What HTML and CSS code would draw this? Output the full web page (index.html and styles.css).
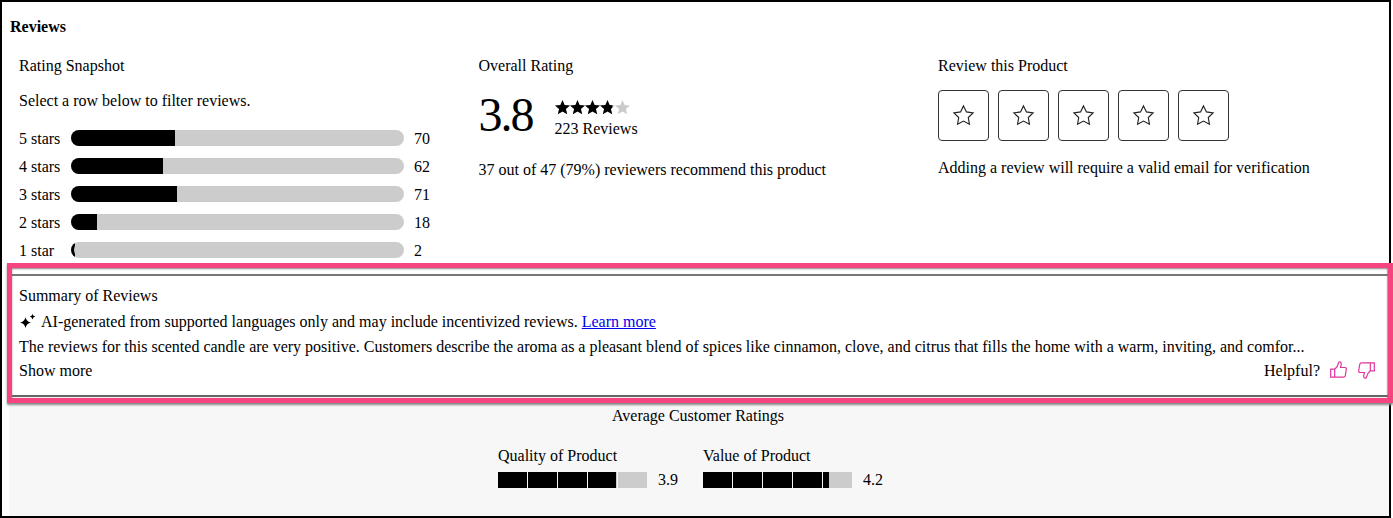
FILE: index.html
```html
<!DOCTYPE html>
<html lang="en">
<head>
<meta charset="utf-8">
<title>Reviews</title>
<link rel="stylesheet" href="styles.css">
</head>
<body>
<main class="frame">
  <h2 class="heading">Reviews</h2>
  <div class="top">
    <section class="col">
      <div class="title">Rating Snapshot</div>
      <p class="hint">Select a row below to filter reviews.</p>
      <div class="rows">
        <div class="row"><span class="row-label">5 stars</span><span class="bar"><span class="bar-fill" style="width:31.2%"></span></span><span class="row-count">70</span></div>
        <div class="row"><span class="row-label">4 stars</span><span class="bar"><span class="bar-fill" style="width:27.7%"></span></span><span class="row-count">62</span></div>
        <div class="row"><span class="row-label">3 stars</span><span class="bar"><span class="bar-fill" style="width:31.8%"></span></span><span class="row-count">71</span></div>
        <div class="row"><span class="row-label">2 stars</span><span class="bar"><span class="bar-fill" style="width:7.9%"></span></span><span class="row-count">18</span></div>
        <div class="row"><span class="row-label">1 star</span><span class="bar bar-tiny"><span class="bar-fill" style="width:1.2%"></span></span><span class="row-count">2</span></div>
      </div>
    </section>
    <section class="col">
      <div class="title">Overall Rating</div>
      <div class="overall">
        <span class="score">3.8</span>
        <div class="score-side">
          <svg class="rating-stars" viewBox="0 0 75 15" aria-hidden="true">
            <defs>
              <path id="s5" d="M7.5 0l2.1 5 5.4.4-4.1 3.5 1.3 5.4-4.7-2.8-4.7 2.8 1.3-5.4L0 5.4 5.4 5z"/>
              <clipPath id="fillclip"><rect x="0" y="0" width="57.5" height="15"/></clipPath>
            </defs>
            <g fill="#ccc">
              <use href="#s5"/><use href="#s5" x="15"/><use href="#s5" x="30"/><use href="#s5" x="45"/><use href="#s5" x="60"/>
            </g>
            <g fill="#000" clip-path="url(#fillclip)">
              <use href="#s5"/><use href="#s5" x="15"/><use href="#s5" x="30"/><use href="#s5" x="45"/><use href="#s5" x="60"/>
            </g>
          </svg>
          <div class="count">223 Reviews</div>
        </div>
      </div>
      <p class="recommend">37 out of 47 (79%) reviewers recommend this product</p>
    </section>
    <section class="col">
      <div class="title">Review this Product</div>
      <div class="star-buttons">
        <button class="star-btn" aria-label="1 star"><svg viewBox="0 0 24 24"><path d="M12 2l3.09 6.26L22 9.27l-5 4.87 1.18 6.88L12 17.77l-6.18 3.25L7 14.14 2 9.27l6.91-1.01z"/></svg></button>
        <button class="star-btn" aria-label="2 stars"><svg viewBox="0 0 24 24"><path d="M12 2l3.09 6.26L22 9.27l-5 4.87 1.18 6.88L12 17.77l-6.18 3.25L7 14.14 2 9.27l6.91-1.01z"/></svg></button>
        <button class="star-btn" aria-label="3 stars"><svg viewBox="0 0 24 24"><path d="M12 2l3.09 6.26L22 9.27l-5 4.87 1.18 6.88L12 17.77l-6.18 3.25L7 14.14 2 9.27l6.91-1.01z"/></svg></button>
        <button class="star-btn" aria-label="4 stars"><svg viewBox="0 0 24 24"><path d="M12 2l3.09 6.26L22 9.27l-5 4.87 1.18 6.88L12 17.77l-6.18 3.25L7 14.14 2 9.27l6.91-1.01z"/></svg></button>
        <button class="star-btn" aria-label="5 stars"><svg viewBox="0 0 24 24"><path d="M12 2l3.09 6.26L22 9.27l-5 4.87 1.18 6.88L12 17.77l-6.18 3.25L7 14.14 2 9.27l6.91-1.01z"/></svg></button>
      </div>
      <p class="verify">Adding a review will require a valid email for verification</p>
    </section>
  </div>

  <section class="summary">
    <div class="summary-inner">
      <div class="summary-title">Summary of Reviews</div>
      <div class="ai-line">
        <svg class="sparkle" viewBox="0 0 17 17" aria-hidden="true"><path d="M6.5 3.2Q7.5 7.6 12 8.6 7.5 9.6 6.5 14 5.5 9.6 1 8.6 5.5 7.6 6.5 3.2z"/><path d="M13.5 0Q14 2.1 16.2 2.6 14 3.1 13.5 5.4 13 3.1 10.8 2.6 13 2.1 13.5 0z"/></svg>
        <span>AI-generated from supported languages only and may include incentivized reviews. <a href="#">Learn more</a></span>
      </div>
      <p class="summary-text">The reviews for this scented candle are very positive. Customers describe the aroma as a pleasant blend of spices like cinnamon, clove, and citrus that fills the home with a warm, inviting, and comfor...</p>
      <div class="summary-foot">
        <span>Show more</span>
        <div class="helpful">
          <span>Helpful?</span>
          <svg class="thumb thumb-up" viewBox="0 0 17 17" aria-hidden="true"><path d="M.7 8.2h4v8h-4zM4.7 8.2C6.5 6.7 8 5 8.5 1.8 8.7.5 11.3.4 11.3 2.8c0 1.6-.6 2.7-.9 3.7H15c1.2 0 1.5 1 1.3 2l-1.1 6.4c-.2.9-.8 1.3-1.7 1.3H4.7"/></svg>
          <svg class="thumb thumb-down" viewBox="0 0 17 17" aria-hidden="true"><path d="M.7 8.2h4v8h-4zM4.7 8.2C6.5 6.7 8 5 8.5 1.8 8.7.5 11.3.4 11.3 2.8c0 1.6-.6 2.7-.9 3.7H15c1.2 0 1.5 1 1.3 2l-1.1 6.4c-.2.9-.8 1.3-1.7 1.3H4.7"/></svg>
        </div>
      </div>
    </div>
  </section>

  <section class="averages">
    <div class="avg-title">Average Customer Ratings</div>
    <div class="avg-groups">
      <div class="avg">
        <div class="avg-label">Quality of Product</div>
        <div class="avg-row">
          <div class="segs">
            <span class="seg"><span class="seg-fill" style="width:100%"></span></span>
            <span class="seg"><span class="seg-fill" style="width:100%"></span></span>
            <span class="seg"><span class="seg-fill" style="width:100%"></span></span>
            <span class="seg"><span class="seg-fill" style="width:96%"></span></span>
            <span class="seg"></span>
          </div>
          <span>3.9</span>
        </div>
      </div>
      <div class="avg">
        <div class="avg-label">Value of Product</div>
        <div class="avg-row">
          <div class="segs">
            <span class="seg"><span class="seg-fill" style="width:100%"></span></span>
            <span class="seg"><span class="seg-fill" style="width:100%"></span></span>
            <span class="seg"><span class="seg-fill" style="width:100%"></span></span>
            <span class="seg"><span class="seg-fill" style="width:100%"></span></span>
            <span class="seg"><span class="seg-fill" style="width:22%"></span></span>
          </div>
          <span>4.2</span>
        </div>
      </div>
    </div>
  </section>
</main>
</body>
</html>
```

FILE: styles.css
```css
* { box-sizing: border-box; }
html, body { margin: 0; padding: 0; background: #fff; }
body {
  width: 1393px;
  height: 518px;
  overflow: hidden;
  font-family: "Liberation Serif", "Times New Roman", serif;
  font-size: 16px;
  line-height: 18px;
  color: #000;
}
p { margin: 0; }

.frame {
  width: 1391px;
  height: 518px;
  border: 2px solid #000;
  display: flex;
  flex-direction: column;
}
.heading {
  margin: 16px 0 0 8px;
  font-size: 16px;
  line-height: 18px;
  font-weight: bold;
}

.top {
  display: grid;
  grid-template-columns: 459.5px 459.5px 1fr;
  padding-left: 17px;
  margin-top: 21px;
  height: 206px;
}
.title { line-height: 18px; }

.hint { margin-top: 17px; }
.rows {
  margin-top: 20px;
  display: flex;
  flex-direction: column;
  gap: 12px;
}
.row {
  display: flex;
  align-items: center;
  height: 16px;
}
.row-label { width: 52px; padding-top: 2px; }
.bar {
  width: 333px;
  height: 16px;
  border-radius: 8px;
  background: #ccc;
  overflow: hidden;
  display: block;
}
.bar-fill { display: block; height: 100%; background: #000; }
.bar-tiny { position: relative; }
.bar-tiny::after {
  content: "";
  position: absolute;
  top: 0;
  left: 3px;
  bottom: 0;
  width: 16px;
  border-radius: 8px 0 0 8px;
  background: #ccc;
}
.row-count { margin-left: 10px; padding-top: 2px; }

.overall {
  display: flex;
  align-items: flex-start;
  margin-top: 15px;
}
.score {
  font-size: 48px;
  line-height: 50px;
  letter-spacing: -2px;
  width: 76px;
}
.score-side { padding-top: 10px; }
.rating-stars { display: block; width: 75px; height: 15px; }
.count { margin-top: 5px; }
.recommend { margin-top: 21px; }

.star-buttons {
  display: flex;
  gap: 9px;
  margin-top: 15px;
}
.star-btn {
  width: 51px;
  height: 51px;
  padding: 0;
  border: 1px solid #333;
  border-radius: 4px;
  background: #fff;
  display: flex;
  align-items: center;
  justify-content: center;
}
.star-btn svg {
  width: 23px;
  height: 23px;
  fill: none;
  stroke: #222;
  stroke-width: 1.2;
}
.verify { margin-top: 18px; }

.summary {
  position: relative;
  z-index: 1;
  margin: 0 -4px 0 5px;
  height: 140px;
  border: 5px solid #f5447f;
  background: #fff;
  box-shadow: 0 2px 2px #888, inset 0 1px 2px #888, inset -1px 0 1px #aaa;
  padding-top: 6px;
}
.summary-inner {
  height: 123px;
  border-top: 2px solid #777;
  border-bottom: 2px solid #666;
  padding: 11px 13px 0 7px;
  display: flex;
  flex-direction: column;
}
.summary-title { line-height: 18px; }
.ai-line {
  display: flex;
  align-items: center;
  margin-top: 8px;
  height: 18px;
}
.sparkle { width: 17px; height: 17px; margin-right: 5px; flex: none; }
a { color: #00e; text-decoration: underline; }
.summary-text { margin-top: 7px; white-space: nowrap; }
.summary-foot {
  margin-top: 5px;
  display: flex;
  justify-content: space-between;
  align-items: center;
}
.helpful { display: flex; align-items: center; }
.thumb {
  width: 17px;
  height: 17px;
  fill: none;
  stroke: #e0359b;
  stroke-width: 1.2;
  margin-left: 11px;
}
.thumb-up { margin-left: 10px; margin-bottom: 2px; }
.thumb-down { transform: rotate(180deg); }

.averages {
  flex: 1;
  margin-left: 7px;
  background: #f7f7f7;
  padding-top: 4px;
}
.avg-title { text-align: center; line-height: 18px; padding-right: 2px; }
.avg-groups {
  display: flex;
  gap: 25px;
  margin-top: 22px;
  padding-left: 489px;
}
.avg { width: 180px; }
.avg-label { line-height: 18px; }
.avg-row {
  display: flex;
  align-items: center;
  gap: 11px;
  margin-top: 7px;
  height: 16px;
}
.segs { display: flex; gap: 1px; width: 149px; height: 16px; }
.seg { flex: 1; background: #ccc; display: block; }
.seg-fill { display: block; height: 100%; background: #000; }
```
